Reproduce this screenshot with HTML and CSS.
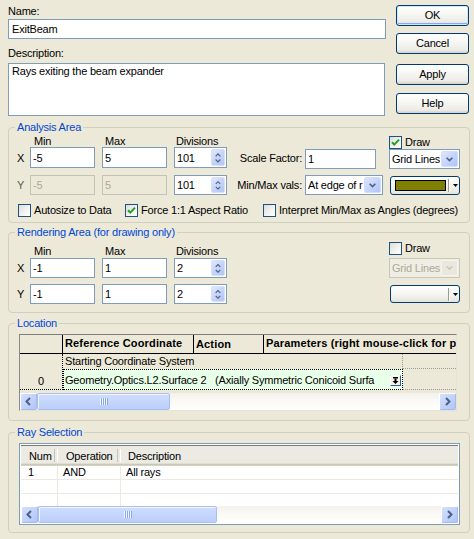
FILE: index.html
```html
<!DOCTYPE html>
<html>
<head>
<meta charset="utf-8">
<title>Ray Selection Dialog</title>
<link rel="stylesheet" href="styles.css">
</head>
<body>
<div class="top">
  <div class="topleft">
    <div class="lbl">Name:</div>
    <div class="textbox name-box">ExitBeam</div>
    <div class="lbl desc-lbl">Description:</div>
    <div class="textbox desc-box">Rays exiting the beam expander</div>
  </div>
  <div class="buttons">
    <div class="btn btn-ok">OK</div>
    <div class="btn btn-cancel">Cancel</div>
    <div class="btn btn-apply">Apply</div>
    <div class="btn btn-help">Help</div>
  </div>
</div>

<fieldset class="group analysis">
  <legend>Analysis Area</legend>
  <div class="agrid">
    <div></div>
    <div class="hdr hdr-min">Min</div>
    <div class="hdr hdr-max">Max</div>
    <div class="hdr hdr-div">Divisions</div>
    <div></div>
    <div></div>
    <div class="draw"><span class="cb"><svg class="chk" viewBox="0 0 11 11"><path d="M2 5.2 L4.3 7.6 L9 2.6" /></svg></span><span>Draw</span></div>

    <div class="axis">X</div>
    <div class="inp">-5</div>
    <div class="inp">5</div>
    <div class="spin"><span class="sval">101</span><span class="sbtn"><svg viewBox="0 0 13 19"><path d="M3.5 8 L6.5 5 L9.5 8"/><path d="M3.5 12 L6.5 15 L9.5 12"/></svg></span></div>
    <div class="rlabel rl-scale">Scale Factor:</div>
    <div class="inp scale-inp">1</div>
    <div class="select grid-sel"><span class="selval">Grid Lines</span><span class="selbtn"><svg viewBox="0 0 17 17"><path d="M5 7 L8.5 10.5 L12 7"/></svg></span></div>

    <div class="axis axis-dim">Y</div>
    <div class="inp dis">-5</div>
    <div class="inp dis">5</div>
    <div class="spin spin-y"><span class="sval">101</span><span class="sbtn"><svg viewBox="0 0 13 19"><path d="M3.5 8 L6.5 5 L9.5 8"/><path d="M3.5 12 L6.5 15 L9.5 12"/></svg></span></div>
    <div class="rlabel">Min/Max vals:</div>
    <div class="select mm-sel"><span class="selval">At edge of r</span><span class="selbtn"><svg viewBox="0 0 17 17"><path d="M5 7 L8.5 10.5 L12 7"/></svg></span></div>
    <div class="colorbtn"><span class="swatch"></span><span class="cdiv"></span><svg class="carrow" viewBox="0 0 5 3"><path d="M0 0 H5 L2.5 3 Z"/></svg></div>
  </div>
  <div class="cbrow">
    <div class="cbitem"><span class="cb"></span><span>Autosize to Data</span></div>
    <div class="cbitem"><span class="cb"><svg class="chk" viewBox="0 0 11 11"><path d="M2 5.2 L4.3 7.6 L9 2.6" /></svg></span><span>Force 1:1 Aspect Ratio</span></div>
    <div class="cbitem"><span class="cb"></span><span>Interpret Min/Max as Angles (degrees)</span></div>
  </div>
</fieldset>

<fieldset class="group rendering">
  <legend>Rendering Area (for drawing only)</legend>
  <div class="rgrid">
    <div></div>
    <div class="hdr hdr-min">Min</div>
    <div class="hdr hdr-max">Max</div>
    <div class="hdr hdr-div">Divisions</div>
    <div></div>
    <div></div>
    <div class="draw draw-r"><span class="cb"></span><span>Draw</span></div>

    <div class="axis">X</div>
    <div class="inp">-1</div>
    <div class="inp">1</div>
    <div class="spin"><span class="sval">2</span><span class="sbtn"><svg viewBox="0 0 13 18"><path d="M3.5 7.5 L6.5 4.5 L9.5 7.5"/><path d="M3.5 11.5 L6.5 14.5 L9.5 11.5"/></svg></span></div>
    <div></div>
    <div></div>
    <div class="select sel-dis"><span class="selval">Grid Lines</span><span class="selbtn"><svg viewBox="0 0 17 18"><path d="M5 7 L8.5 10.5 L12 7"/></svg></span></div>

    <div class="axis">Y</div>
    <div class="inp">-1</div>
    <div class="inp">1</div>
    <div class="spin"><span class="sval">2</span><span class="sbtn"><svg viewBox="0 0 13 18"><path d="M3.5 7.5 L6.5 4.5 L9.5 7.5"/><path d="M3.5 11.5 L6.5 14.5 L9.5 11.5"/></svg></span></div>
    <div></div>
    <div></div>
    <div class="colorbtn colorbtn-r"><span class="swatch-empty"></span><span class="cdiv"></span><svg class="carrow" viewBox="0 0 5 3"><path d="M0 0 H5 L2.5 3 Z"/></svg></div>
  </div>
</fieldset>

<fieldset class="group location">
  <legend>Location</legend>
  <div class="loc">
    <div class="loc-head">
      <div class="lh lh-corner"></div>
      <div class="lh lh-ref">Reference Coordinate</div>
      <div class="lh lh-act">Action</div>
      <div class="lh lh-par">Parameters (right mouse-click for p</div>
    </div>
    <div class="loc-body">
      <div class="rowhdr">0</div>
      <div class="rows">
        <div class="r1">
          <div class="r1main">Starting Coordinate System</div>
          <div class="r1rest"></div>
        </div>
        <div class="r2">
          <div class="r2main"><span class="r2text">Geometry.Optics.L2.Surface 2&nbsp;&nbsp;&nbsp;(Axially Symmetric Conicoid Surfa</span><svg class="ddicon" viewBox="0 0 11 11"><rect x="0.5" y="0.5" width="10" height="10" fill="#F4F2EA" stroke="#3C5A98"/><path d="M0.5 10.5 V0.5 H10.5" stroke="#FFFFFF" fill="none"/><rect x="3" y="2" width="5" height="1.5" fill="#000"/><rect x="4.5" y="3.5" width="2" height="2.5" fill="#000"/><path d="M2.5 6 H8.5 L5.5 9 Z" fill="#000"/></svg></div>
          <div class="r2rest"></div>
        </div>
      </div>
    </div>
    <div class="hs">
      <span class="arr"><svg viewBox="0 0 15 15"><path d="M9 4 L5.5 7.5 L9 11"/></svg></span>
      <span class="thumb thumb-loc"><span class="grip"></span></span>
      <span class="track"></span>
      <span class="arr"><svg viewBox="0 0 15 15"><path d="M6 4 L9.5 7.5 L6 11"/></svg></span>
    </div>
  </div>
</fieldset>

<fieldset class="group rays">
  <legend>Ray Selection</legend>
  <div class="lv">
    <div class="lv-head">
      <div class="hc hc1">Num</div>
      <div class="hc hc2">Operation</div>
      <div class="hc hc3">Description</div>
    </div>
    <div class="lv-rows">
      <div class="lr"><div class="c1">1</div><div class="c2">AND</div><div class="c3">All rays</div></div>
      <div class="lr"><div class="c1"></div><div class="c2"></div><div class="c3"></div></div>
      <div class="lr"><div class="c1"></div><div class="c2"></div><div class="c3"></div></div>
    </div>
    <div class="hs">
      <span class="arr"><svg viewBox="0 0 15 15"><path d="M9 4 L5.5 7.5 L9 11"/></svg></span>
      <span class="thumb thumb-lv"><span class="grip"></span></span>
      <span class="track"></span>
      <span class="arr"><svg viewBox="0 0 15 15"><path d="M6 4 L9.5 7.5 L6 11"/></svg></span>
    </div>
  </div>
</fieldset>
</body>
</html>
```

FILE: styles.css
```css
* { box-sizing: border-box; }
html, body { margin: 0; padding: 0; }
body {
  width: 474px;
  height: 539px;
  overflow: hidden;
  background: #ECE9D8;
  font-family: "Liberation Sans", Arial, sans-serif;
  font-size: 11px;
  line-height: 13px;
  letter-spacing: -0.2px;
  color: #000;
}

/* ---------- top ---------- */
.top { display: flex; padding-top: 5px; }
.topleft { width: 378px; margin-left: 8px; }
.lbl { height: 13px; }
.textbox { background: #fff; border: 1px solid #7F9DB9; padding-left: 3px; }
.name-box { height: 20px; margin-top: 1px; display: flex; align-items: center; }
.desc-lbl { margin-top: 8px; }
.desc-box { width: 377px; height: 53px; margin-top: 3px; padding-top: 1px; }

.buttons { margin-left: 10px; width: 73px; display: flex; flex-direction: column; }
.btn {
  height: 21px;
  border: 1px solid #003C74;
  border-radius: 3px;
  background: linear-gradient(#FFFFFF 0%, #F7F7F4 40%, #ECEBE6 85%, #D6D0C5 100%);
  display: flex; align-items: center; justify-content: center;
}
.btn-ok { box-shadow: inset 0 0 0 1px #CEE7FF, inset 0 -1px 0 1px #88A8EE; }
.btn-cancel { margin-top: 7px; }
.btn-apply { margin-top: 10px; }
.btn-help { margin-top: 8px; }

/* ---------- group boxes ---------- */
.group {
  margin: 0 0 0 8px;
  width: 462px;
  border: 1px solid #D0D0BF;
  border-radius: 4px;
  padding: 0 4px;
  min-width: 0;
}
.group legend {
  margin-left: 2px;
  padding: 0 2px;
  color: #0046D5;
  line-height: 13px;
}
.analysis { margin-top: 5px; padding-top: 2px; padding-bottom: 5px; }
.rendering { margin-top: 3px; padding-top: 5px; padding-bottom: 8px; }
.location { margin-top: 4px; padding-top: 4px; padding-bottom: 9px; }
.rays { margin-top: 5px; padding-top: 4px; padding-bottom: 7px; }

/* ---------- area grids ---------- */
.agrid, .rgrid {
  display: grid;
  grid-template-columns: 17px 72px 72px 53px 78px 84px 71px;
  align-items: start;
}
.agrid { grid-template-rows: 11px 28px 20px; }
.rgrid { grid-template-rows: 14px 26px 20px; }

.hdr { line-height: 11px; white-space: nowrap; }
.rgrid .hdr { line-height: 13px; padding-top: 1px; }
.hdr-min { padding-left: 4px; }
.hdr-max { padding-left: 3px; }
.hdr-div { padding-left: 2px; }

.axis { height: 21px; display: flex; align-items: center; padding-left: 4px; padding-top: 1px; }
.axis-dim { color: #5A5A5A; height: 20px; }
.rgrid .axis { height: 20px; padding-top: 0; }

.inp {
  width: 65px; height: 21px;
  background: #fff;
  border: 1px solid #7F9DB9;
  padding-left: 2px; padding-top: 1px;
  display: flex; align-items: center;
  white-space: nowrap; overflow: hidden;
}
.agrid .inp.dis, .rgrid .inp { height: 20px; }
.inp.dis { background: #ECE9D8; border-color: #C3C3B6; color: #ACA899; }
.scale-inp { width: 71px; height: 20px; margin-top: 2px; }

.spin {
  width: 53px; height: 21px;
  background: #fff;
  border: 1px solid #7F9DB9;
  display: flex;
}
.spin-y, .rgrid .spin { height: 20px; }
.sval { flex: 1; padding-left: 2px; padding-top: 1px; display: flex; align-items: center; }
.sbtn {
  width: 14px; margin: 1px;
  border-radius: 2px;
  background: linear-gradient(135deg, #E1E9FC 0%, #C6D4F7 50%, #B2C5F2 100%);
  border: 1px solid #D6E0FA;
  display: flex;
}
.sbtn svg { width: 100%; height: 100%; }
.sbtn path { stroke: #4D6185; stroke-width: 1.5; fill: none; }

.rlabel {
  height: 20px; margin-top: 0;
  display: flex; align-items: center; justify-content: flex-end;
  padding-right: 3px; white-space: nowrap;
}
.rl-scale { margin-top: 2px; height: 19px; }

.select {
  height: 20px;
  background: #fff;
  border: 1px solid #7F9DB9;
  display: flex;
}
.grid-sel { width: 71px; margin-top: 2px; }
.mm-sel { width: 78px; }
.selval { flex: 1; padding-left: 2px; padding-top: 1px; display: flex; align-items: center; white-space: nowrap; overflow: hidden; }
.selbtn {
  width: 17px; margin: 1px; flex: none;
  border-radius: 2px;
  background: linear-gradient(135deg, #DCE6FD 0%, #C3D3FB 55%, #B0C4F4 100%);
  border: 1px solid #D2DEFB;
  display: flex; align-items: center;
}
.selbtn svg { width: 100%; height: 100%; }
.selbtn path { stroke: #4D6185; stroke-width: 2; fill: none; }
.sel-dis { width: 71px; border-color: #C9C7BA; background: #F0EEE4; color: #ACA899; }
.sel-dis .selbtn { background: #EAE8DE; border-color: #F5F4EE; }
.sel-dis .selbtn path { stroke: #C9C7BA; }

.draw { display: flex; align-items: center; gap: 3px; height: 13px; }
.draw-r { margin-top: -2px; }

.cb {
  width: 13px; height: 13px;
  border: 1px solid #1C5180;
  background: linear-gradient(135deg, #DCDCD7 0%, #F4F4F1 60%, #FFFFFF 100%);
  display: inline-flex; flex: none;
}
.chk { width: 11px; height: 11px; }
.chk path { stroke: #21A121; stroke-width: 2; fill: none; }

.colorbtn {
  width: 70px; height: 19px; margin-left: 1px; margin-top: 1px;
  border: 1px solid #003C74;
  border-radius: 3px;
  background: linear-gradient(#FFFFFF 0%, #F5F5F2 50%, #E6E4DB 100%);
  display: flex; align-items: center;
  padding-left: 4px;
}
.colorbtn-r { height: 18px; }
.swatch { width: 51px; height: 11px; background: #808000; border: 1px solid #000; }
.swatch-empty { width: 51px; height: 11px; }
.cdiv { width: 2px; height: 13px; margin-left: 2px; border-left: 1px solid #9D9A8A; border-right: 1px solid #fff; }
.carrow { width: 5px; height: 3px; margin-left: 3px; }

.cbrow {
  display: grid;
  grid-template-columns: 107px 138px auto;
  margin-top: 9px;
  padding-left: 5px;
}
.cbitem { display: flex; align-items: center; gap: 3px; height: 13px; white-space: nowrap; }

/* ---------- location grid ---------- */
.loc {
  margin-left: 6px;
  width: 438px; height: 77px;
  border: 1px solid;
  border-color: #7F7F7F #E4E2D6 #E4E2D6 #8A8A8A;
  display: flex; flex-direction: column;
  overflow: hidden;
}
.loc-head { display: flex; height: 19px; flex: none; }
.lh {
  height: 19px;
  background: #ECE9D8;
  border-right: 1px solid #000;
  border-bottom: 1px solid #000;
  font-weight: bold;
  letter-spacing: 0.15px;
  overflow: hidden;
  white-space: nowrap;
}
.lh-corner { width: 43px; }
.lh-ref { width: 131px; padding: 2px 3px 0 2px; }
.lh-act { width: 70px; padding: 3px 0 0 2px; }
.lh-par { flex: 1; padding: 2px 0 0 2px; border-right: none; }

.loc-body { display: flex; height: 39px; flex: none; }
.rowhdr {
  width: 43px; height: 36px;
  border-right: 1px dotted #000;
  border-bottom: 1px dotted #000;
  display: flex; align-items: flex-end; justify-content: center;
  padding-bottom: 1px;
}
.rows { flex: 1; display: flex; flex-direction: column; }
.r1 { display: flex; height: 15px; }
.r1main { width: 339px; padding: 1px 0 0 2px; white-space: nowrap; }
.r1rest { flex: 1; border-left: 1px dotted #9A9A9A; border-bottom: 1px dotted #9A9A9A; }
.r2 { display: flex; height: 21px; }
.r2main {
  width: 340px;
  background: #E8FFE8;
  border: 1px dotted #000;
  display: flex; align-items: center;
  padding-left: 1px; padding-top: 1px;
}
.r2text { flex: 1; white-space: nowrap; overflow: hidden; }
.ddicon { width: 11px; height: 11px; margin: 0 1px 0 4px; flex: none; }
.r2rest { flex: 1; border-bottom: 1px dotted #9A9A9A; }

/* ---------- scrollbars ---------- */
.hs {
  display: flex; height: 17px; flex: none;
  background: linear-gradient(#F3F1EC 0%, #FBFAF6 50%, #FEFEFB 100%);
}
.arr {
  width: 17px; height: 17px; flex: none;
  border: 1px solid;
  border-color: #FFFFFF #A4B9EE #A4B9EE #FFFFFF;
  border-radius: 2px;
  background: linear-gradient(135deg, #D4E0FD 0%, #C3D3FB 50%, #B1C5F5 100%);
  display: flex;
}
.arr svg { width: 100%; height: 100%; }
.arr path { stroke: #4D6185; stroke-width: 2; fill: none; }
.thumb {
  height: 17px; flex: none;
  border: 1px solid #A9BFF2;
  border-radius: 2px;
  box-shadow: inset 1px 1px 0 #F2F6FE;
  background: linear-gradient(#CFDCFD 0%, #C6D6FC 50%, #BBCDF9 100%);
  display: flex; align-items: center; justify-content: center;
}
.thumb-loc { width: 133px; }
.thumb-lv { width: 179px; }
.grip {
  width: 8px; height: 7px;
  background: repeating-linear-gradient(90deg, #EEF4FE 0 1px, #8CA8E8 1px 2px);
}
.track { flex: 1; }

/* ---------- list view ---------- */
.lv {
  margin-left: 6px;
  width: 441px; height: 82px;
  border: 1px solid #7F9DB9;
  background: #fff;
  padding: 1px;
  display: flex; flex-direction: column;
}
.lv-head {
  display: grid;
  grid-template-columns: 37px 63px 1fr;
  height: 21px; flex: none;
  background: #EBEAE3;
  border-top: 1px solid #7A7A7A;
  box-shadow: inset 0 -1px 0 #D6D2C2, inset 0 -2px 0 #CBC7B8, inset 0 -3px 0 #E2DECD;
}
.hc { position: relative; padding-top: 4px; white-space: nowrap; }
.hc1 { padding-left: 8px; }
.hc2 { padding-left: 8px; }
.hc3 { padding-left: 7px; }
.hc1::after, .hc2::after {
  content: "";
  position: absolute; right: 0; top: 3px; bottom: 4px;
  width: 2px;
  border-left: 1px solid #C7C5B2;
  border-right: 1px solid #FFFFFF;
}
.lv-rows { height: 40px; flex: none; }
.lr { display: grid; grid-template-columns: 37px 63px 1fr; height: 14px; border-bottom: 1px solid #EBE9E0; }
.lr:last-child { border-bottom: none; height: 12px; }
.lr > div { border-right: 1px solid #EBE9E0; white-space: nowrap; }
.lr > .c3 { border-right: none; }
.lr .c1 { padding-left: 7px; }
.lr .c2 { padding-left: 5px; }
.lr .c3 { padding-left: 5px; }
```
